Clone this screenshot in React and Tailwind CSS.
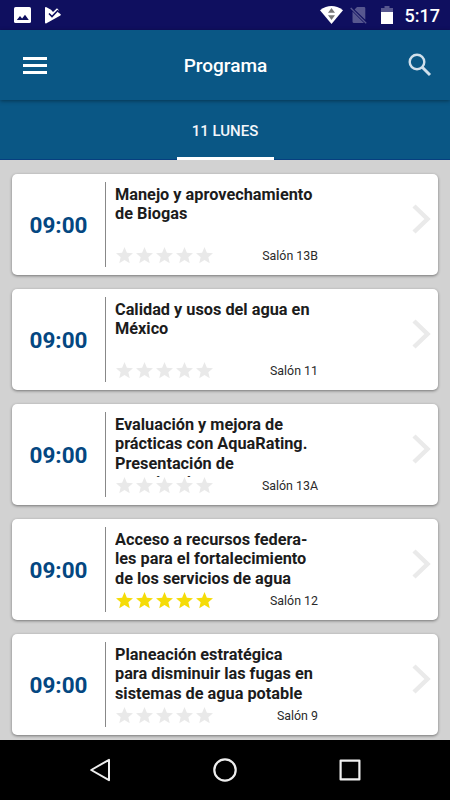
import React from 'react';

const sessions = [
  { time: '09:00', lines: ['Manejo y aprovechamiento', 'de Biogas'], room: 'Salón 13B', rating: 0 },
  { time: '09:00', lines: ['Calidad y usos del agua en', 'México'], room: 'Salón 11', rating: 0 },
  { time: '09:00', lines: ['Evaluación y mejora de', 'prácticas con AquaRating.', 'Presentación de', 'experiencias'], room: 'Salón 13A', rating: 0 },
  { time: '09:00', lines: ['Acceso a recursos federa-', 'les para el fortalecimiento', 'de los servicios de agua'], room: 'Salón 12', rating: 5 },
  { time: '09:00', lines: ['Planeación estratégica', 'para disminuir las fugas en', 'sistemas de agua potable'], room: 'Salón 9', rating: 0 },
];

function StatusBar() {
  return (
    <div className="flex h-[30px] shrink-0 items-center bg-[#0f0f5f] pl-3.5 pr-2.5 text-white">
      {/* Notificaciones */}
      <svg className="h-[17px] w-[17px]" viewBox="0 0 17 17">
        <rect width="17" height="16" rx="1.6" fill="#fff" />
        <path d="M2.8 13 6 9l2.1 2.5L11 7.7l3.8 5.3z" fill="#0f0f5f" />
      </svg>
      <svg className="ml-3.5 h-[17px] w-4" viewBox="0 0 16 17">
        <path d="M0 .8Q.3-.3 1.5.3L6 2.7 8 5l4-3.8 1.8 2.1-1.5 1.5L15.4 7q.9.8 0 1.5L1.5 16.2Q.2 16.8 0 15.5z" fill="#fff" />
        <path d="m4 6.5 3 3L13 3.3" fill="none" stroke="#0f0f5f" strokeWidth="1.6" />
      </svg>

      {/* Sistema */}
      <svg className="ml-auto h-[18px] w-[23px]" viewBox="0 0 23 18">
        <path d="M0 4.2Q11.5-4 23 4.2L11.5 18z" fill="#fff" />
        <path d="M8 6.7h7L11.5 2zM8 9.3h7L11.5 14z" fill="#777" />
      </svg>
      <svg className="ml-[7px] h-[18px] w-[17px]" viewBox="0 0 17 18">
        <path d="M7 1h7q1.3 0 1.3 1.3v11.5L4.6 3.4zM2.5 5.5 14 17H4q-1.5 0-1.5-1.5z" fill="#57578f" />
        <path d="m.7 2 15.5 15.3" stroke="#57578f" strokeWidth="1.3" />
      </svg>
      <svg className="ml-[14px] h-[18px] w-3" viewBox="0 0 12 18">
        <path d="M0 2h3.5V0h5v2H12v4H0z" fill="#57578f" />
        <path d="M0 6h12v12H0z" fill="#fff" />
      </svg>
      <span className="ml-3 pt-0.5 text-[18px] font-medium leading-none">5:17</span>
    </div>
  );
}

function Header() {
  return (
    <header className="z-10 flex h-[70px] shrink-0 items-center justify-between bg-[#0a5785] pl-[23px] pr-[18px] shadow-[0_1px_4px_rgba(0,0,0,0.4)]">
      <button aria-label="Menú" className="flex w-5 flex-col gap-1">
        <span className="h-[3px] w-6 bg-white" />
        <span className="h-[3px] w-6 bg-white" />
        <span className="h-[3px] w-6 bg-white" />
      </button>
      <h1 className="pt-0.5 text-[19px] font-medium text-white">Programa</h1>
      <button aria-label="Buscar">
        <svg className="h-6 w-6" viewBox="0 0 24 24" fill="none" stroke="#d0dfeb" strokeWidth="2.4">
          <circle cx="9" cy="9" r="7.3" />
          <path d="m14 14 8 8" strokeWidth="3" />
        </svg>
      </button>
    </header>
  );
}

function Stars({ rating }) {
  return (
    <div className="flex gap-[3px]">
      {[1, 2, 3, 4, 5].map((n) => (
        <svg key={n} className={n <= rating ? 'h-[17px] w-[17px] text-[#f5dc08]' : 'h-[17px] w-[17px] text-[#e9e9e9]'} viewBox="2 2 20 20" fill="currentColor">
          <path d="M12 17.27 18.18 21l-1.64-7.03L22 9.24l-7.19-.61L12 2 9.19 8.63 2 9.24l5.46 4.73L5.82 21z" />
        </svg>
      ))}
    </div>
  );
}

function SessionCard({ session }) {
  return (
    <article className="flex h-[101px] shrink-0 rounded-[5px] bg-white py-2 shadow-[0_1px_3px_rgba(0,0,0,0.45)]">
      <div className="flex w-[93px] items-center justify-center pt-[3px] text-[22.5px] font-bold text-[#044781]">
        {session.time}
      </div>
      <div className="w-px bg-[#888]" />
      <div className="flex w-[208px] flex-col pl-[9px]">
        <h2 className="mt-[3px] h-[62px] overflow-hidden whitespace-nowrap text-[16.3px] font-bold leading-[19.3px] text-[#1c1c1c]">
          {session.lines.map((line) => (
            <span key={line} className="block">{line}</span>
          ))}
        </h2>
        <div className="flex h-[17px] items-center justify-between pl-px">
          <Stars rating={session.rating} />
          <span className="-mr-1 pt-px text-[12.4px] text-[#2a2a2a]">{session.room}</span>
        </div>
      </div>
      <svg className="ml-auto mr-[6.5px] mt-[22px] h-[30px] w-[19px]" viewBox="0 0 19 30" fill="none" stroke="#eaeaea" strokeWidth="4.5">
        <path d="m2 2 13.5 13L2 28" />
      </svg>
    </article>
  );
}

function NavigationBar() {
  return (
    <nav className="flex h-[60px] shrink-0 items-center bg-black px-[37px]">
      <div className="flex flex-1 justify-center">
        <svg className="h-6 w-6" viewBox="0 0 24 24" fill="none" stroke="#eee" strokeWidth="2" strokeLinejoin="round">
          <path d="M21 1.8v20.4L3.2 12z" />
        </svg>
      </div>
      <div className="flex flex-1 justify-center">
        <svg className="h-6 w-6" viewBox="0 0 24 24" fill="none" stroke="#eee" strokeWidth="2.2">
          <circle cx="12" cy="12" r="10.7" />
        </svg>
      </div>
      <div className="flex flex-1 justify-center">
        <svg className="h-6 w-6" viewBox="0 0 24 24" fill="none" stroke="#eee" strokeWidth="2.2" strokeLinejoin="round">
          <path d="M2.6 2.6h18.8v18.8H2.6z" />
        </svg>
      </div>
    </nav>
  );
}

export default function App() {
  return (
    <div className="flex h-[800px] w-[450px] flex-col overflow-hidden bg-[#d2d2d2] font-[Roboto,sans-serif]">
      <StatusBar />
      <Header />
      <div className="flex h-[60px] shrink-0 justify-center border-b border-[#073f80] bg-[#0a5785]">
        <button className="-mb-px h-[60px] w-[97px] border-b-[3px] border-white pt-1.5 text-[15px] font-medium text-[#f3f6fa]">
          11 LUNES
        </button>
      </div>
      <main className="flex flex-1 flex-col gap-3.5 overflow-hidden pl-3 pr-[12.5px] pt-3.5">
        {sessions.map((session) => (
          <SessionCard key={session.lines[0]} session={session} />
        ))}
      </main>
      <NavigationBar />
    </div>
  );
}
